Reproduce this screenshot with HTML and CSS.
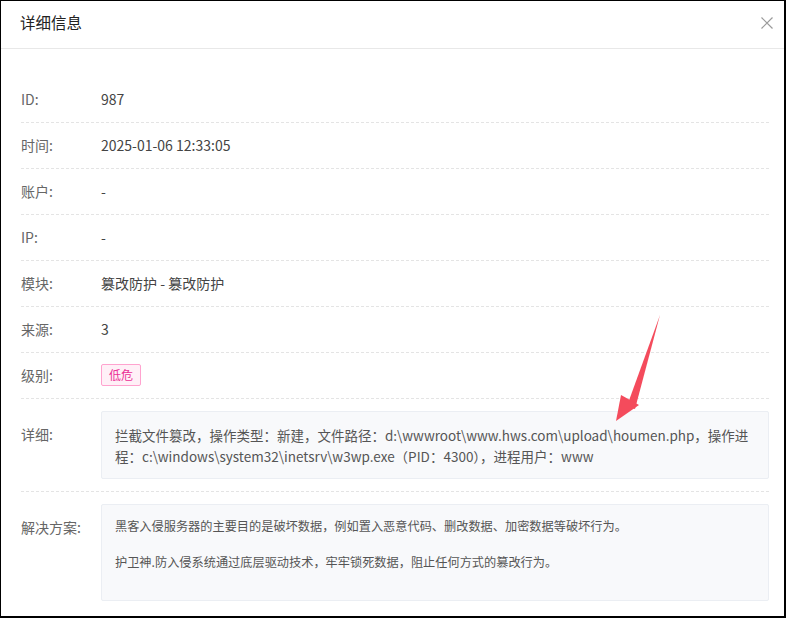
FILE: index.html
```html
<!DOCTYPE html>
<html lang="zh-CN">
<head>
<meta charset="utf-8">
<title>详细信息</title>
<link rel="stylesheet" href="styles.css">
</head>
<body>
<div class="win">
  <div class="head">
    <div class="title">详细信息</div>
    <svg class="close" width="14" height="14" viewBox="0 0 14 14"><path d="M1.5 1.5 L12.5 12.5 M12.5 1.5 L1.5 12.5" stroke="#9a9a9a" stroke-width="1.2" fill="none"/></svg>
  </div>
  <div class="body">
    <div class="row"><div class="lab">ID:</div><div class="val">987</div></div>
    <div class="row"><div class="lab">时间:</div><div class="val">2025-01-06 12:33:05</div></div>
    <div class="row"><div class="lab">账户:</div><div class="val">-</div></div>
    <div class="row"><div class="lab">IP:</div><div class="val">-</div></div>
    <div class="row"><div class="lab">模块:</div><div class="val">篡改防护 - 篡改防护</div></div>
    <div class="row"><div class="lab">来源:</div><div class="val">3</div></div>
    <div class="row"><div class="lab">级别:</div><div class="val"><span class="tag">低危</span></div></div>
    <div class="row boxrow"><div class="lab">详细:</div><div class="box detail">拦截文件篡改，操作类型：新建，文件路径：d:\wwwroot\www.hws.com\upload\houmen.php，操作进程：c:\windows\system32\inetsrv\w3wp.exe（PID：4300），进程用户：www</div></div>
    <div class="row boxrow last"><div class="lab">解决方案:</div><div class="box sol"><p>黑客入侵服务器的主要目的是破坏数据，例如置入恶意代码、删改数据、加密数据等破坏行为。</p><p>护卫神.防入侵系统通过底层驱动技术，牢牢锁死数据，阻止任何方式的篡改行为。</p></div></div>
  </div>
  <svg class="arrow" width="60" height="120" viewBox="0 0 60 120"><path d="M47 2 L14 93 L22 96 Z" fill="#f44b5c"/><path d="M3 108 L8 82 L26 92 Z" fill="#f44b5c"/></svg>
</div>
</body>
</html>
```
FILE: styles.css
```css
* { box-sizing: border-box; }
html, body { margin: 0; padding: 0; background: #fff; }
body { font-family: "Noto Sans CJK SC", "Noto Sans", sans-serif; font-size: 14px; color: #333; }
.win { position: relative; width: 786px; height: 618px; border-style: solid; border-color: #000; border-width: 1px 2px 2px 1px; overflow: hidden; }
.head { height: 48px; border-bottom: 1px solid #e8e8e8; display: flex; align-items: center; justify-content: space-between; padding: 0 10px 0 19px; }
.title { font-size: 15.5px; color: #222; margin-top: -6px; }
.close { margin-top: -4px; }
.body { padding: 28px 15px 0 20px; }
.row { display: flex; align-items: center; height: 46px; padding-bottom: 2px; border-bottom: 1px dashed #e4e4e4; }
.lab { width: 80px; flex: none; color: #666; }
.val { color: #444; }
.tag { display: inline-block; height: 22px; line-height: 20px; padding: 0 7px; border: 1px solid #ffa3cf; background: #fff0f7; color: #eb2f96; border-radius: 2px; font-size: 12px; }
.boxrow { height: auto; align-items: flex-start; padding: 12px 0; }
.boxrow .lab { padding-top: 13px; line-height: 21px; }
.box { flex: 1; background: #f8f9fb; border: 1px solid #ebeef3; border-radius: 2px; color: #555; line-height: 21px; }
.detail { padding: 13px 14px 11px 13px; font-size: 13.5px; }
.sol { padding: 11px 14px 12px 13px; font-size: 12.2px; }
.sol p { margin: 0 0 15px; }
.last { border-bottom: none; }
.arrow { position: absolute; left: 612px; top: 312px; }
```
